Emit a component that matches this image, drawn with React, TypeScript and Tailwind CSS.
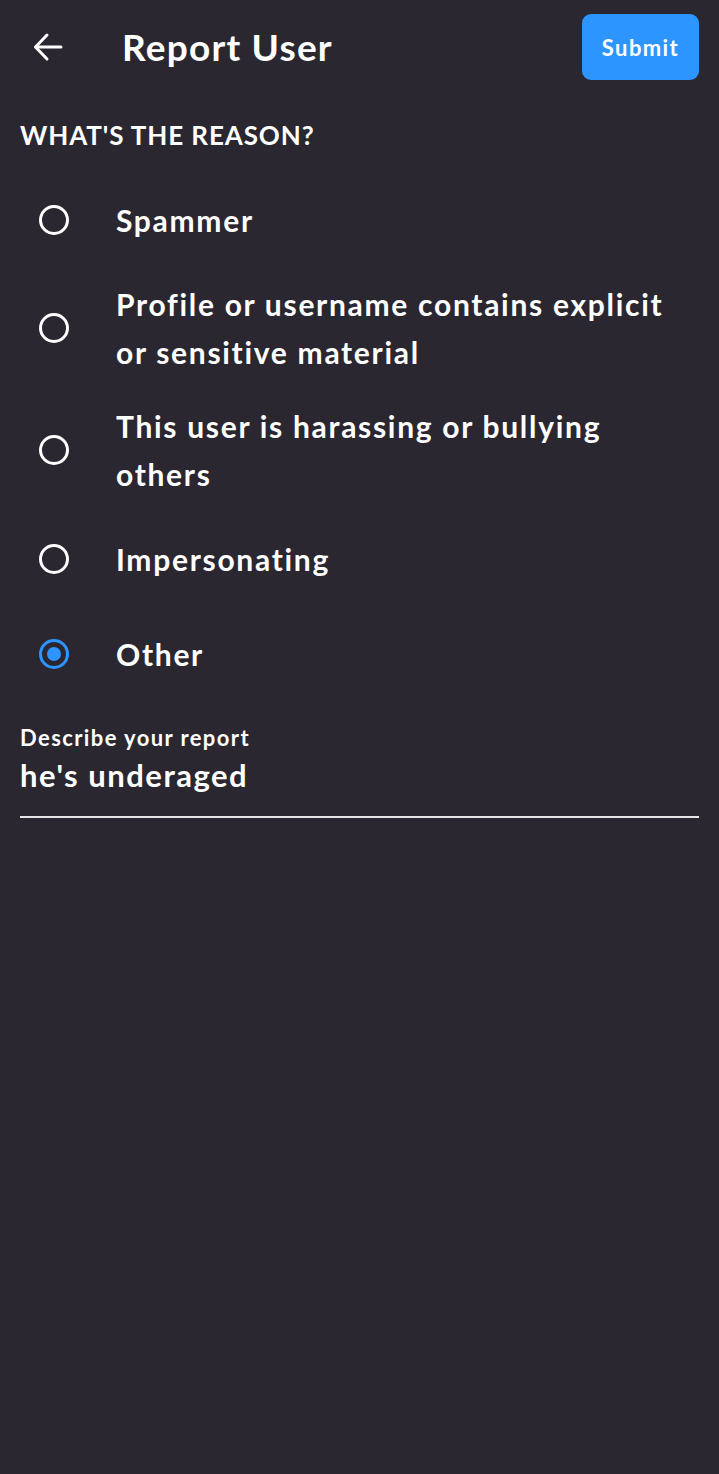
import { useState } from "react";

const reasons = [
  "Spammer",
  "Profile or username contains explicit or sensitive material",
  "This user is harassing or bullying others",
  "Impersonating",
  "Other",
];

function Radio({ checked }: { checked: boolean }) {
  return (
    <span
      className={`flex h-[30px] w-[30px] shrink-0 items-center justify-center rounded-full border-[3px] ${
        checked ? "border-[#2d95ff]" : "border-white"
      }`}
    >
      {checked && <span className="block h-[14px] w-[14px] rounded-full bg-[#2d95ff]" />}
    </span>
  );
}

export default function App() {
  const [selected, setSelected] = useState(4);

  return (
    <div className="min-h-[1474px] w-full bg-[#2a2731] font-['Lato','Liberation_Sans',sans-serif] text-white">
      <header className="flex h-[94px] items-center pl-[33px] pr-[20px]">
        <button aria-label="Back" className="flex h-[30px] w-[30px] items-center justify-center">
          <svg width="30" height="30" viewBox="0 0 30 30" fill="none" stroke="white" strokeWidth="3" strokeLinecap="round" strokeLinejoin="round">
            <path d="M28 15H3" />
            <path d="M14 3L2.5 15 14 27" />
          </svg>
        </button>
        <h1 className="ml-[59px] flex-1 text-[37px] font-bold tracking-[1.2px]">Report User</h1>
        <button className="h-[66px] w-[117px] rounded-[9px] bg-[#2d95ff] text-[22px] font-bold tracking-[1.4px]">Submit</button>
      </header>

      <div className="px-[20px]">
        <h2 className="pt-[25px] pb-[11px] text-[26px] font-bold leading-[32px] tracking-[0.9px]">WHAT'S THE REASON?</h2>

        <div className="mt-[10px] flex flex-col">
          {reasons.map((r, i) => (
            <label
              key={r}
              onClick={() => setSelected(i)}
              className="flex min-h-[95px] cursor-pointer items-center py-[13px]"
            >
              <span className="flex w-[96px] shrink-0 pl-[19px]">
                <Radio checked={selected === i} />
              </span>
              <span className="text-[30px] font-bold leading-[48px] tracking-[1.7px]">{r}</span>
            </label>
          ))}
        </div>

        <div className="mt-[23px] border-b-2 border-[#e6e6e6] pb-[21px]">
          <div className="text-[22px] font-bold leading-[28px] tracking-[1.4px]">Describe your report</div>
          <div className="mt-[3px] text-[31px] font-bold leading-[40px] tracking-[1.5px]">he's underaged</div>
        </div>
      </div>
    </div>
  );
}
